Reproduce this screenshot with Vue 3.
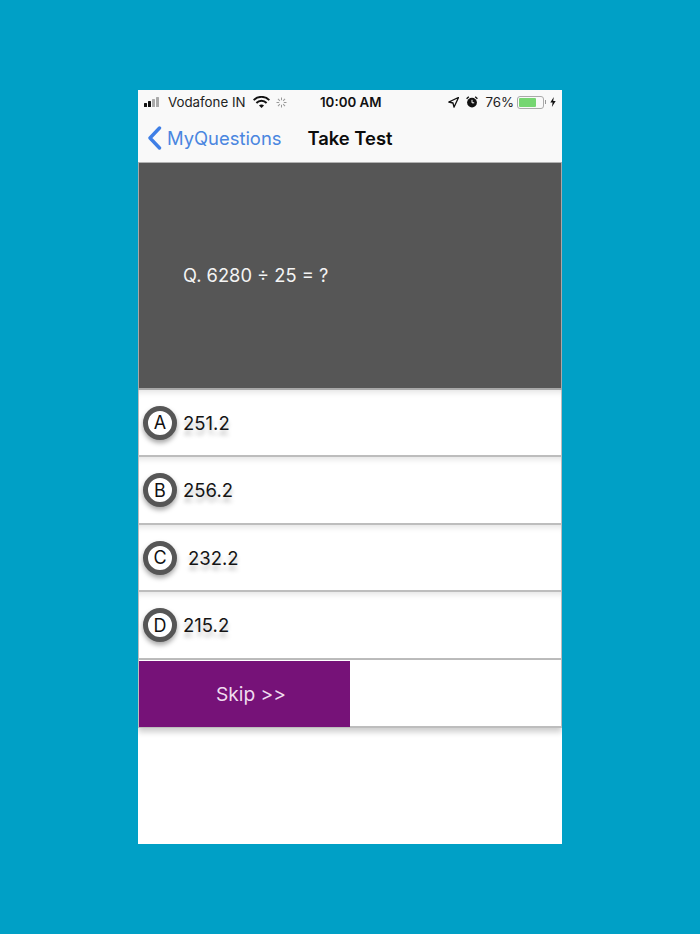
<script setup>
const options = [
  { key: 'A', text: '251.2', cls: '' },
  { key: 'B', text: '256.2', cls: '' },
  { key: 'C', text: '232.2', cls: 'indent' },
  { key: 'D', text: '215.2', cls: '' }
]
const spokes = [0, 45, 90, 135, 180, 225, 270, 315]
</script>

<template>
  <div class="page">
    <div class="phone">
      <div class="status">
        <div class="status-left">
          <svg class="signal" width="20" height="10" viewBox="0 0 20 10">
            <rect x="0" y="6" width="3" height="4" rx="0.5" fill="#111" />
            <rect x="4" y="4" width="3" height="6" rx="0.5" fill="#111" />
            <rect x="8" y="2" width="3" height="8" rx="0.5" fill="#aaa" />
            <rect x="12" y="0" width="3" height="10" rx="0.5" fill="#aaa" />
          </svg>
          <span class="carrier">Vodafone IN</span>
          <svg class="wifi" width="17" height="12" viewBox="0 0 17 12">
            <path d="M0.6 4.2A11 11 0 0 1 16.4 4.2" fill="none" stroke="#111" stroke-width="1.9" />
            <path d="M3.4 7A7 7 0 0 1 13.6 7" fill="none" stroke="#111" stroke-width="1.9" />
            <path d="M6 9.5A3.4 3.4 0 0 1 11 9.5L8.5 12Z" fill="#111" />
          </svg>
          <svg class="spinner" width="11" height="11" viewBox="0 0 11 11">
            <line v-for="a in spokes" :key="a" x1="5.5" y1="0.5" x2="5.5" y2="3.2" stroke="#999" stroke-width="1"
              :transform="`rotate(${a} 5.5 5.5)`" />
          </svg>
        </div>
        <span class="time">10:00 AM</span>
        <div class="status-right">
          <svg width="11" height="11" viewBox="0 0 11 11">
            <path d="M10.5 0.5L0.8 5L5 6L6 10.2Z" fill="none" stroke="#111" stroke-width="1.3" stroke-linejoin="round" />
          </svg>
          <svg class="alarm" width="12" height="12" viewBox="0 0 12 12">
            <circle cx="6" cy="6.6" r="4.9" fill="#111" />
            <path d="M0.6 2.8L2.8 0.8M11.4 2.8L9.2 0.8" stroke="#111" stroke-width="1.4" />
            <path d="M6 3.8V6.8H8.2" fill="none" stroke="#fff" stroke-width="1" />
          </svg>
          <span class="pct">76%</span>
          <div class="battery"><div class="level"></div></div>
          <div class="nub"></div>
          <svg class="bolt" width="6" height="10" viewBox="0 0 6 10">
            <path d="M3.8 0L0.3 5.6H2.6L1.9 10L5.7 4.1H3.2Z" fill="#111" />
          </svg>
        </div>
      </div>
      <div class="nav">
        <div class="back">
          <svg width="15" height="24" viewBox="0 0 15 24">
            <path d="M12.5 2L3 12L12.5 22" fill="none" stroke="#3f7fe6" stroke-width="3.4" stroke-linecap="round" stroke-linejoin="round" />
          </svg>
          <span>MyQuestions</span>
        </div>
        <span class="title">Take Test</span>
      </div>
      <div class="question">Q. 6280 ÷ 25 = ?</div>
      <div v-for="o in options" :key="o.key" class="option">
        <div class="badge">{{ o.key }}</div>
        <span class="answer" :class="o.cls">{{ o.text }}</span>
      </div>
      <div class="actions">
        <div class="skip">Skip &gt;&gt;</div>
      </div>
    </div>
  </div>
</template>

<style scoped>
.page {
  box-sizing: border-box;
  height: 934px;
  padding-top: 90px;
  background: #00a0c6;
  font-family: Inter, "Liberation Sans", Arial, sans-serif;
}
.phone {
  width: 424px;
  height: 754px;
  margin-left: 138px;
  background: #fff;
  display: flex;
  flex-direction: column;
  overflow: hidden;
}
.status {
  height: 24px;
  flex: none;
  background: #f9f9f9;
  position: relative;
  display: flex;
  align-items: center;
  justify-content: space-between;
  padding: 0 6px;
  font-size: 13.3px;
  color: #222;
}
.status-left, .status-right {
  display: flex;
  align-items: center;
}
.carrier { margin-left: 4px; }
.wifi { margin-left: 7px; }
.spinner { margin-left: 6px; }
.time {
  position: absolute;
  left: 182px;
  font-weight: 600;
  font-size: 13.3px;
  color: #111;
}
.alarm { margin-left: 7px; }
.pct { margin-left: 7px; }
.battery {
  box-sizing: border-box;
  width: 27px;
  height: 13px;
  margin-left: 3px;
  border: 1px solid #aaa;
  border-radius: 3px;
  padding: 1px;
}
.level {
  width: 76%;
  height: 100%;
  background: #76d672;
  border-radius: 1px;
}
.nub {
  width: 1px;
  height: 4px;
  margin-left: 1px;
  background: #999;
}
.bolt { margin-left: 4px; }
.nav {
  height: 49px;
  flex: none;
  box-sizing: border-box;
  background: #f9f9f9;
  border-bottom: 1px solid #b2b2b2;
  display: flex;
  align-items: center;
  position: relative;
  padding-left: 9px;
}
.back {
  display: flex;
  align-items: center;
  gap: 5px;
  color: #4a86e0;
  font-size: 18.4px;
}
.title {
  position: absolute;
  left: 0;
  right: 0;
  text-align: center;
  font-size: 18.4px;
  font-weight: 600;
  color: #0c0c0c;
  pointer-events: none;
}
.question {
  box-sizing: border-box;
  height: 226.8px;
  flex: none;
  background: #565656;
  border: 1px solid #a8a8a8;
  border-top: 0;
  border-bottom-width: 2px;
  color: #f4f4f4;
  font-size: 18.3px;
  display: flex;
  align-items: center;
  padding-left: 44px;
}
.option {
  box-sizing: border-box;
  height: 67.5px;
  flex: none;
  border: 1px solid #bdbdbd;
  border-bottom-width: 2px;
  border-top: 0;
  box-shadow: inset 0 7px 6px -5px rgba(0, 0, 0, 0.12);
  display: flex;
  align-items: center;
  padding-left: 4px;
}
.badge {
  box-sizing: border-box;
  width: 34px;
  height: 34px;
  flex: none;
  border: 5.5px solid #565656;
  border-radius: 50%;
  background: #fff;
  box-shadow: 0 3px 5px rgba(0, 0, 0, 0.35);
  display: flex;
  align-items: center;
  justify-content: center;
  font-size: 18px;
  color: #111;
}
.answer {
  margin-left: 6px;
  font-size: 18.5px;
  color: #151515;
  text-shadow: 0 5px 4px rgba(0, 0, 0, 0.25);
}
.answer.indent { margin-left: 11px; }
.actions {
  box-sizing: border-box;
  height: 68.2px;
  flex: none;
  border: 1px solid #bdbdbd;
  border-top: 0;
  border-bottom-width: 2px;
  box-shadow: 0 4px 6px rgba(0, 0, 0, 0.2);
  display: flex;
  padding-top: 1px;
}
.skip {
  box-sizing: border-box;
  width: 211px;
  margin-bottom: -1px;
  padding-left: 13px;
  background: #761278;
  color: #efdcef;
  font-size: 19.2px;
  display: flex;
  align-items: center;
  justify-content: center;
}
</style>
